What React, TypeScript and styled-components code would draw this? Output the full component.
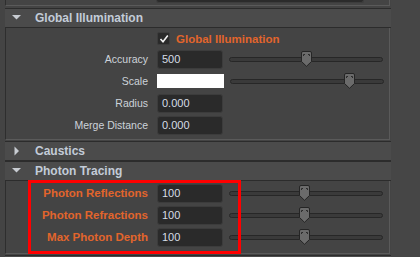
import React from "react";
import styled, { createGlobalStyle } from "styled-components";

const GlobalStyle = createGlobalStyle`
	html, body {
		margin: 0;
		padding: 0;
		background: #444444;
	}
	body {
		font-family: "Liberation Sans", Arial, sans-serif;
	}
`;

const Page = styled.div`
	position: relative;
	display: flex;
	width: 420px;
	height: 257px;
	overflow: hidden;
	background: #444444;
	padding-left: 5px;
	box-sizing: border-box;
`;

const Column = styled.div`
	width: 386px;
	display: flex;
	flex-direction: column;
`;

const RightStrip = styled.div`
	flex: 1;
	background: #464646;
`;

const PrevFrame = styled.div`
	height: 6px;
	flex: none;
	box-sizing: border-box;
	margin-right: 1px;
	border-left: 1px solid #2e2e2e;
	border-right: 1px solid #5a5a5a;
	border-bottom: 1px solid #5a5a5a;
	padding-left: 150px;
`;

const FieldTail = styled.div`
	width: 208px;
	height: 3px;
	box-sizing: border-box;
	background: #2b2b2b;
	border: 1px solid #3d3d3d;
	border-top: none;
	border-radius: 0 0 3px 3px;
`;

const Header = styled.div<{ $gap?: number }>`
	height: 20px;
	flex: none;
	box-sizing: border-box;
	margin-top: ${(p) => p.$gap ?? 0}px;
	display: flex;
	align-items: center;
	background: #4b4b4b;
	border-top: 1px solid #2c2c2c;
	border-bottom: 1px solid #2c2c2c;
	color: #c3ccd8;
	font-size: 12px;
	font-weight: bold;
	svg {
		width: 30px;
		flex: none;
	}
`;

const Body = styled.div<{ $top: number; $bottom: number }>`
	flex: none;
	margin-right: 1px;
	box-sizing: border-box;
	border-left: 1px solid #2e2e2e;
	border-right: 1px solid #5a5a5a;
	border-bottom: 1px solid #5a5a5a;
	padding: ${(p) => p.$top}px 0 ${(p) => p.$bottom}px 0;
	display: flex;
	flex-direction: column;
`;

const CheckRow = styled.div`
	height: 19px;
	display: flex;
	align-items: center;
	padding-left: 151px;
	gap: 6px;
	color: #e2652c;
	font-size: 11.5px;
	font-weight: bold;
`;

const CheckBox = styled.div`
	width: 13px;
	height: 13px;
	box-sizing: border-box;
	background: #2a2a2a;
	border: 1px solid #3c3c3c;
	border-radius: 2px;
	display: flex;
	align-items: center;
	justify-content: center;
`;

const Row = styled.div`
	height: 22px;
	display: flex;
	align-items: center;
`;

const Label = styled.div<{ $hot?: boolean }>`
	width: 142px;
	margin-right: 9px;
	text-align: right;
	white-space: nowrap;
	color: ${(p) => (p.$hot ? "#e2652c" : "#cdd3da")};
	font-size: ${(p) => (p.$hot ? "11.5px" : "10.5px")};
	font-weight: ${(p) => (p.$hot ? "bold" : "normal")};
`;

const Field = styled.div`
	width: 66px;
	height: 19px;
	box-sizing: border-box;
	background: #2a2a2a;
	border: 1px solid #3c3c3c;
	border-radius: 3px;
	padding-left: 4px;
	display: flex;
	align-items: center;
	color: #d6dde6;
	font-size: 11px;
`;

const Swatch = styled.div`
	width: 67px;
	height: 14px;
	background: #ffffff;
`;

const SliderBox = styled.div`
	position: relative;
	width: 154px;
	height: 16px;
	margin-left: 6px;
	display: flex;
	align-items: center;
`;

const Track = styled.div`
	width: 100%;
	height: 5px;
	box-sizing: border-box;
	background: #3a3a3a;
	border: 1px solid #272727;
	border-radius: 3px;
`;

const Thumb = styled.svg`
	position: absolute;
	top: 0;
	width: 11px;
	height: 16px;
`;

const RedBox = styled.div`
	position: absolute;
	left: 28px;
	top: 180px;
	width: 213px;
	height: 74px;
	box-sizing: border-box;
	border: 3px solid #ff0000;
`;

const TriDown = () => (
	<svg viewBox="0 0 30 18" height="18">
		<path d="M7 6 H16 L11.5 10.5 Z" fill="#c8ccd2" />
	</svg>
);

const TriRight = () => (
	<svg viewBox="0 0 30 18" height="18">
		<path d="M9.5 4.5 L14 9 L9.5 13.5 Z" fill="#c8ccd2" />
	</svg>
);

const Slider = ({ value }: { value: number }) => (
	<SliderBox>
		<Track />
		<Thumb viewBox="0 0 11 16" style={{ left: `${value * 143}px` }}>
			<path
				d="M0.5 2 Q0.5 0.5 2 0.5 H9 Q10.5 0.5 10.5 2 V10.5 L5.5 15.3 L0.5 10.5 Z"
				fill="#6b6b6b"
				stroke="#252525"
			/>
			<path d="M2.5 3.5 V5 M2.5 3.5 H4 M8.5 3.5 V5 M8.5 3.5 H7" stroke="#2a2a2a" />
		</Thumb>
	</SliderBox>
);

const ValueRow = ({
	label,
	value,
	pos,
	hot,
}: {
	label: string;
	value?: string;
	pos: number;
	hot?: boolean;
}) => (
	<Row>
		<Label $hot={hot}>{label}</Label>
		{value === undefined ? <Swatch /> : <Field>{value}</Field>}
		<Slider value={pos} />
	</Row>
);

export default function App() {
	return (
		<>
			<GlobalStyle />
			<Page>
				<Column>
					<PrevFrame>
						<FieldTail />
					</PrevFrame>
					<Header $gap={2}>
						<TriDown />
						Global Illumination
					</Header>
					<Body $top={1} $bottom={3}>
						<CheckRow>
							<CheckBox>
								<svg width="10" height="10" viewBox="0 0 10 10">
									<path d="M1.5 5 L4 7.8 L8.8 1.5" fill="none" stroke="#f2f2f2" strokeWidth="1.6" />
								</svg>
							</CheckBox>
							Global Illumination
						</CheckRow>
						<ValueRow label="Accuracy" value="500" pos={0.5} />
						<ValueRow label="Scale" pos={0.8} />
						<Row>
							<Label>Radius</Label>
							<Field>0.000</Field>
						</Row>
						<Row>
							<Label>Merge Distance</Label>
							<Field>0.000</Field>
						</Row>
					</Body>
					<Header $gap={1}>
						<TriRight />
						Caustics
					</Header>
					<Header>
						<TriDown />
						Photon Tracing
					</Header>
					<Body $top={1} $bottom={5}>
						<ValueRow label="Photon Reflections" value="100" pos={0.49} hot />
						<ValueRow label="Photon Refractions" value="100" pos={0.49} hot />
						<ValueRow label="Max Photon Depth" value="100" pos={0.49} hot />
					</Body>
					<Header $gap={1}>
						<TriRight />
					</Header>
				</Column>
				<RightStrip />
				<RedBox />
			</Page>
		</>
	);
}
